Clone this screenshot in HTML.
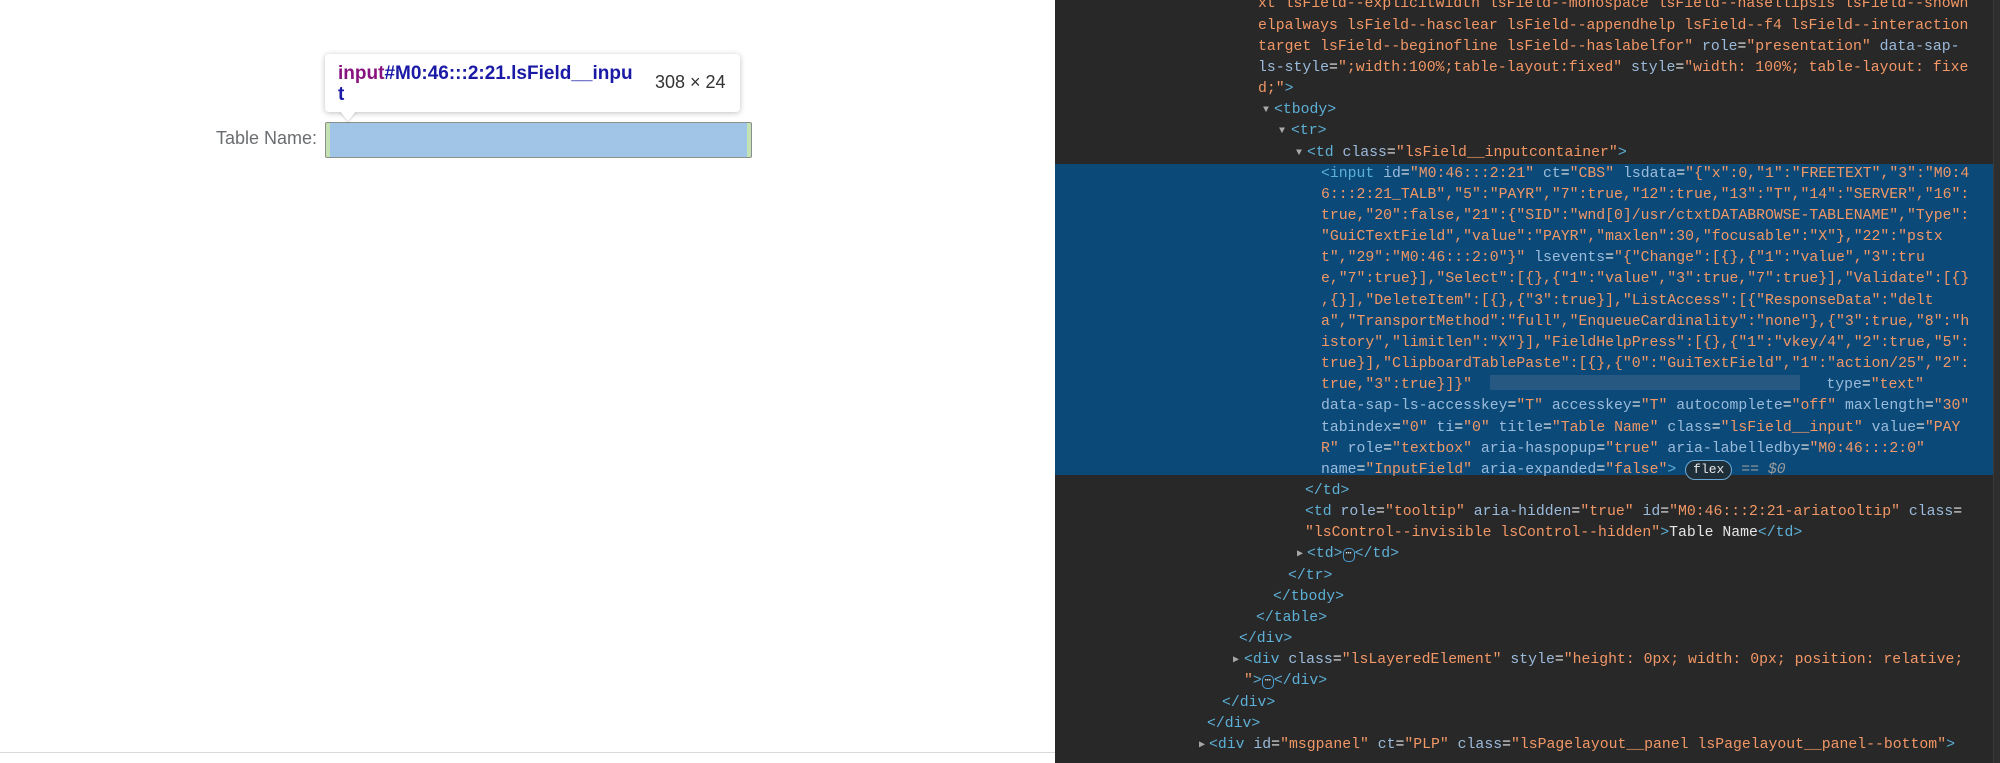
<!DOCTYPE html>
<html><head><meta charset="utf-8"><style>
*{margin:0;padding:0;box-sizing:border-box}
html,body{width:2000px;height:763px;overflow:hidden;background:#fff;position:relative}
#left{position:absolute;left:0;top:0;width:1055px;height:763px;background:#fff}
#bline{position:absolute;left:0;top:752px;width:1055px;height:1px;background:#d9d9d9}
#lbl{position:absolute;left:0;width:317px;text-align:right;top:128px;font:18px "Liberation Sans",sans-serif;color:#6a6d70;white-space:nowrap}
#inp{position:absolute;left:325px;top:122px;width:427px;height:36px;border:1px solid #8b8f8b;background:#c5e2b5;border-radius:2px}
#inp div{position:absolute;left:4px;right:4px;top:0;bottom:0;background:#a0c5e7}
#tip{position:absolute;left:325px;top:54px;width:415px;height:58px;background:#fff;border-radius:4px;box-shadow:0 1px 6px rgba(0,0,0,.25)}
#tip .a{position:absolute;left:14px;top:56px;width:0;height:0;border-left:9px solid transparent;border-right:9px solid transparent;border-top:11px solid #fff;filter:drop-shadow(0 2px 1px rgba(0,0,0,.12))}
#tip .s{position:absolute;left:13px;top:9px;font:bold 19px/21px "Liberation Sans",sans-serif;color:#1a1aa6;white-space:nowrap}
#tip .s b{color:#881280}
#tip .d{position:absolute;left:330px;top:18px;font:18px "Liberation Sans",sans-serif;color:#333}
#dev{position:absolute;left:1055px;top:0;width:945px;height:763px;background:#282828;overflow:hidden}
#hl{position:absolute;left:0;top:163.8px;width:938px;height:311px;background:#0b4a78}
#sb{position:absolute;right:0;top:0;width:7px;height:763px;background:#2e2e2e;border-left:1px solid #3a3a3a}
#code{position:absolute;left:0;top:-5.6px;width:945px;font:14.8px/21.17px "Liberation Mono",monospace;color:#e6e6e6}
#code div{height:21.17px;position:relative;white-space:pre}
.t{color:#5db0d7}.n{color:#9bbbdc}.v{color:#f29766}.w{color:#e6e6e6}
.tri{position:absolute;color:#a8a8a8;font-size:10px;top:0}
.el{display:inline-block;border:1px solid #4a9fd0;border-radius:5px;color:#cfe6f5;font-size:10px;line-height:12px;padding:0 2px;vertical-align:1px}
.fx{display:inline-block;border:1px solid #6aa8d6;border-radius:10px;background:#1f2f3a;color:#e6e6e6;font-size:13px;line-height:18px;padding:0 7px;vertical-align:0}
.g{color:#9a9a9a}
.red{display:inline-block;width:310px;height:15px;background:#2b5b82;vertical-align:-2px;opacity:.85}
</style></head><body>
<div id="left">
<div id="lbl">Table Name:</div>
<div id="inp"><div></div></div>
<div id="tip"><div class="a"></div><div class="s"><b>input</b>#M0:46:::2:21.lsField__inpu<br>t</div><div class="d">308 × 24</div></div>
<div id="bline"></div>
</div>
<div id="dev">
<div id="hl"></div>
<div id="sb"></div>
<div id="code"><div style="padding-left:203px"><span class="v">xt lsField--explicitwidth lsField--monospace lsField--hasellipsis lsField--showh</span></div><div style="padding-left:203px"><span class="v">elpalways lsField--hasclear lsField--appendhelp lsField--f4 lsField--interaction</span></div><div style="padding-left:203px"><span class="v">target lsField--beginofline lsField--haslabelfor"</span><span class="n"> role</span>=<span class="v">"presentation"</span><span class="n"> data-sap-</span></div><div style="padding-left:203px"><span class="n">ls-style</span>=<span class="v">";width:100%;table-layout:fixed"</span><span class="n"> style</span>=<span class="v">"width: 100%; table-layout: fixe</span></div><div style="padding-left:203px"><span class="v">d;"</span><span class="t">&gt;</span></div><div style="padding-left:219px"><span class="tri" style="left:208px">▼</span><span class="t">&lt;tbody&gt;</span></div><div style="padding-left:236px"><span class="tri" style="left:224px">▼</span><span class="t">&lt;tr&gt;</span></div><div style="padding-left:252px"><span class="tri" style="left:241px">▼</span><span class="t">&lt;td</span><span class="n"> class</span>=<span class="v">"lsField__inputcontainer"</span><span class="t">&gt;</span></div><div style="padding-left:266px"><span class="t">&lt;input</span><span class="n"> id</span>=<span class="v">"M0:46:::2:21"</span><span class="n"> ct</span>=<span class="v">"CBS"</span><span class="n"> lsdata</span>=<span class="v">"{"x":0,"1":"FREETEXT","3":"M0:4</span></div><div style="padding-left:266px"><span class="v">6:::2:21_TALB","5":"PAYR","7":true,"12":true,"13":"T","14":"SERVER","16":</span></div><div style="padding-left:266px"><span class="v">true,"20":false,"21":{"SID":"wnd[0]/usr/ctxtDATABROWSE-TABLENAME","Type":</span></div><div style="padding-left:266px"><span class="v">"GuiCTextField","value":"PAYR","maxlen":30,"focusable":"X"},"22":"pstx</span></div><div style="padding-left:266px"><span class="v">t","29":"M0:46:::2:0"}"</span><span class="n"> lsevents</span>=<span class="v">"{"Change":[{},{"1":"value","3":tru</span></div><div style="padding-left:266px"><span class="v">e,"7":true}],"Select":[{},{"1":"value","3":true,"7":true}],"Validate":[{}</span></div><div style="padding-left:266px"><span class="v">,{}],"DeleteItem":[{},{"3":true}],"ListAccess":[{"ResponseData":"delt</span></div><div style="padding-left:266px"><span class="v">a","TransportMethod":"full","EnqueueCardinality":"none"},{"3":true,"8":"h</span></div><div style="padding-left:266px"><span class="v">istory","limitlen":"X"}],"FieldHelpPress":[{},{"1":"vkey/4","2":true,"5":</span></div><div style="padding-left:266px"><span class="v">true}],"ClipboardTablePaste":[{},{"0":"GuiTextField","1":"action/25","2":</span></div><div style="padding-left:266px"><span class="v">true,"3":true}]}"</span>  <span class="red"></span><span class="n">   type</span>=<span class="v">"text"</span></div><div style="padding-left:266px"><span class="n">data-sap-ls-accesskey</span>=<span class="v">"T"</span><span class="n"> accesskey</span>=<span class="v">"T"</span><span class="n"> autocomplete</span>=<span class="v">"off"</span><span class="n"> maxlength</span>=<span class="v">"30"</span></div><div style="padding-left:266px"><span class="n">tabindex</span>=<span class="v">"0"</span><span class="n"> ti</span>=<span class="v">"0"</span><span class="n"> title</span>=<span class="v">"Table Name"</span><span class="n"> class</span>=<span class="v">"lsField__input"</span><span class="n"> value</span>=<span class="v">"PAY</span></div><div style="padding-left:266px"><span class="v">R"</span><span class="n"> role</span>=<span class="v">"textbox"</span><span class="n"> aria-haspopup</span>=<span class="v">"true"</span><span class="n"> aria-labelledby</span>=<span class="v">"M0:46:::2:0"</span></div><div style="padding-left:266px"><span class="n">name</span>=<span class="v">"InputField"</span><span class="n"> aria-expanded</span>=<span class="v">"false"</span><span class="t">&gt;</span> <span class="fx">flex</span> <span class="g">== <i>$0</i></span></div><div style="padding-left:250px"><span class="t">&lt;/td&gt;</span></div><div style="padding-left:250px"><span class="t">&lt;td</span><span class="n"> role</span>=<span class="v">"tooltip"</span><span class="n"> aria-hidden</span>=<span class="v">"true"</span><span class="n"> id</span>=<span class="v">"M0:46:::2:21-ariatooltip"</span><span class="n"> class</span>=</div><div style="padding-left:250px"><span class="v">"lsControl--invisible lsControl--hidden"</span><span class="t">&gt;</span><span class="w">Table Name</span><span class="t">&lt;/td&gt;</span></div><div style="padding-left:252px"><span class="tri" style="left:242px">▶</span><span class="t">&lt;td&gt;</span><span class="el">⋯</span><span class="t">&lt;/td&gt;</span></div><div style="padding-left:233px"><span class="t">&lt;/tr&gt;</span></div><div style="padding-left:218px"><span class="t">&lt;/tbody&gt;</span></div><div style="padding-left:201px"><span class="t">&lt;/table&gt;</span></div><div style="padding-left:184px"><span class="t">&lt;/div&gt;</span></div><div style="padding-left:189px"><span class="tri" style="left:178px">▶</span><span class="t">&lt;div</span><span class="n"> class</span>=<span class="v">"lsLayeredElement"</span><span class="n"> style</span>=<span class="v">"height: 0px; width: 0px; position: relative;</span></div><div style="padding-left:189px"><span class="v">"</span><span class="t">&gt;</span><span class="el">⋯</span><span class="t">&lt;/div&gt;</span></div><div style="padding-left:167px"><span class="t">&lt;/div&gt;</span></div><div style="padding-left:152px"><span class="t">&lt;/div&gt;</span></div><div style="padding-left:154px"><span class="tri" style="left:144px">▶</span><span class="t">&lt;div</span><span class="n"> id</span>=<span class="v">"msgpanel"</span><span class="n"> ct</span>=<span class="v">"PLP"</span><span class="n"> class</span>=<span class="v">"lsPagelayout__panel lsPagelayout__panel--bottom"</span><span class="t">&gt;</span></div></div>
</div>
</body></html>
